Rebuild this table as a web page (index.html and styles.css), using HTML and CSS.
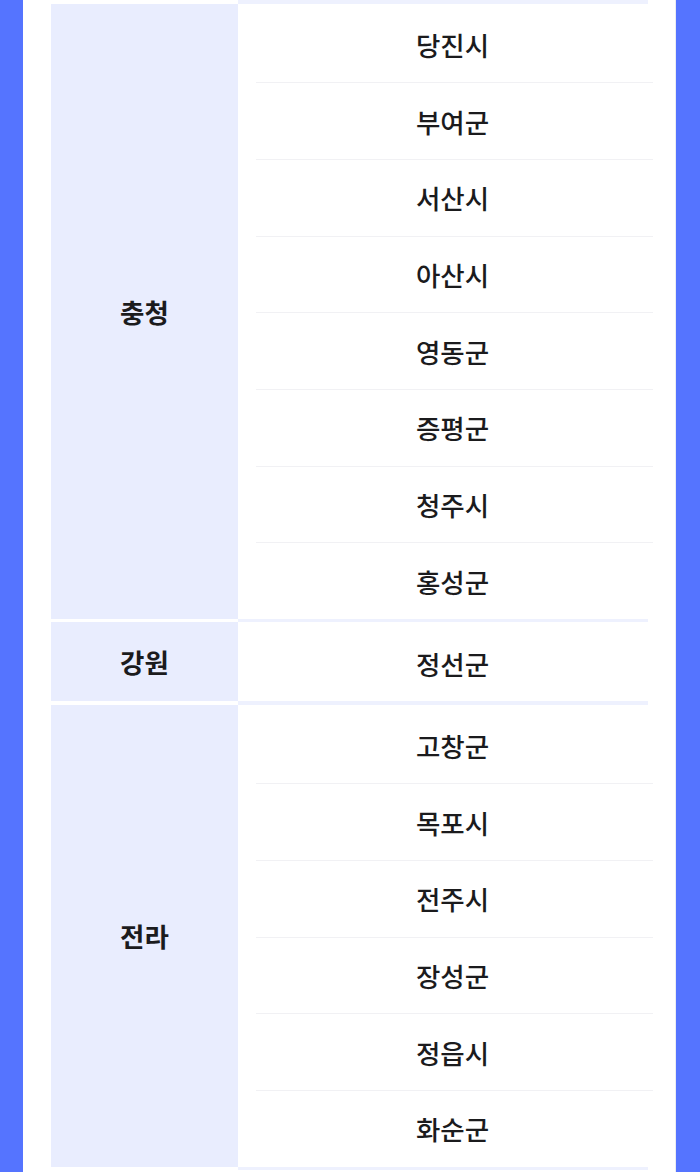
FILE: index.html
```html
<!DOCTYPE html>
<html lang="ko">
<head>
<meta charset="utf-8">
<title>지역</title>
<link rel="stylesheet" href="styles.css">
</head>
<body>
<div class="panel">
  <div class="sep"></div>
  <div class="group">
    <div class="region">충청</div>
    <div class="cities">
      <div class="city">당진시</div>
      <div class="city">부여군</div>
      <div class="city">서산시</div>
      <div class="city">아산시</div>
      <div class="city">영동군</div>
      <div class="city">증평군</div>
      <div class="city">청주시</div>
      <div class="city">홍성군</div>
    </div>
  </div>
  <div class="sep"></div>
  <div class="group">
    <div class="region">강원</div>
    <div class="cities">
      <div class="city">정선군</div>
    </div>
  </div>
  <div class="sep"></div>
  <div class="group">
    <div class="region">전라</div>
    <div class="cities">
      <div class="city">고창군</div>
      <div class="city">목포시</div>
      <div class="city">전주시</div>
      <div class="city">장성군</div>
      <div class="city">정읍시</div>
      <div class="city">화순군</div>
    </div>
  </div>
  <div class="sep"></div>
</div>
</body>
</html>
```
FILE: styles.css
```css
html, body {
  margin: 0;
  padding: 0;
  background: #5574ff;
}
body {
  font-family: "Noto Sans CJK KR", "Noto Sans", sans-serif;
  color: #1b1b1d;
}
.panel {
  margin: 0 24px 0 23px;
  background: #ffffff;
  padding: 0 22px 0 28px;
  border-right: 1px solid #ececf0;
  min-height: 1172px;
  box-sizing: border-box;
}
.sep {
  height: 3.6px;
  margin-left: 187px;
  width: 410px;
  background: #eef1fe;
}
.group {
  display: flex;
}
.region {
  width: 187px;
  flex: none;
  background: #e9edfe;
  display: flex;
  align-items: center;
  justify-content: center;
  font-size: 26.5px;
  font-weight: 600;
}
.cities {
  flex: 1;
  padding-top: 3px;
}
.city {
  height: 76.67px;
  margin-left: 18px;
  border-bottom: 1px solid #f1f1f4;
  display: flex;
  align-items: center;
  justify-content: center;
  font-size: 26.5px;
  font-weight: 500;
  padding: 0 4px 0 0;
  box-sizing: border-box;
}
.city:last-child {
  border-bottom: none;
  height: 75.67px;
}
```
